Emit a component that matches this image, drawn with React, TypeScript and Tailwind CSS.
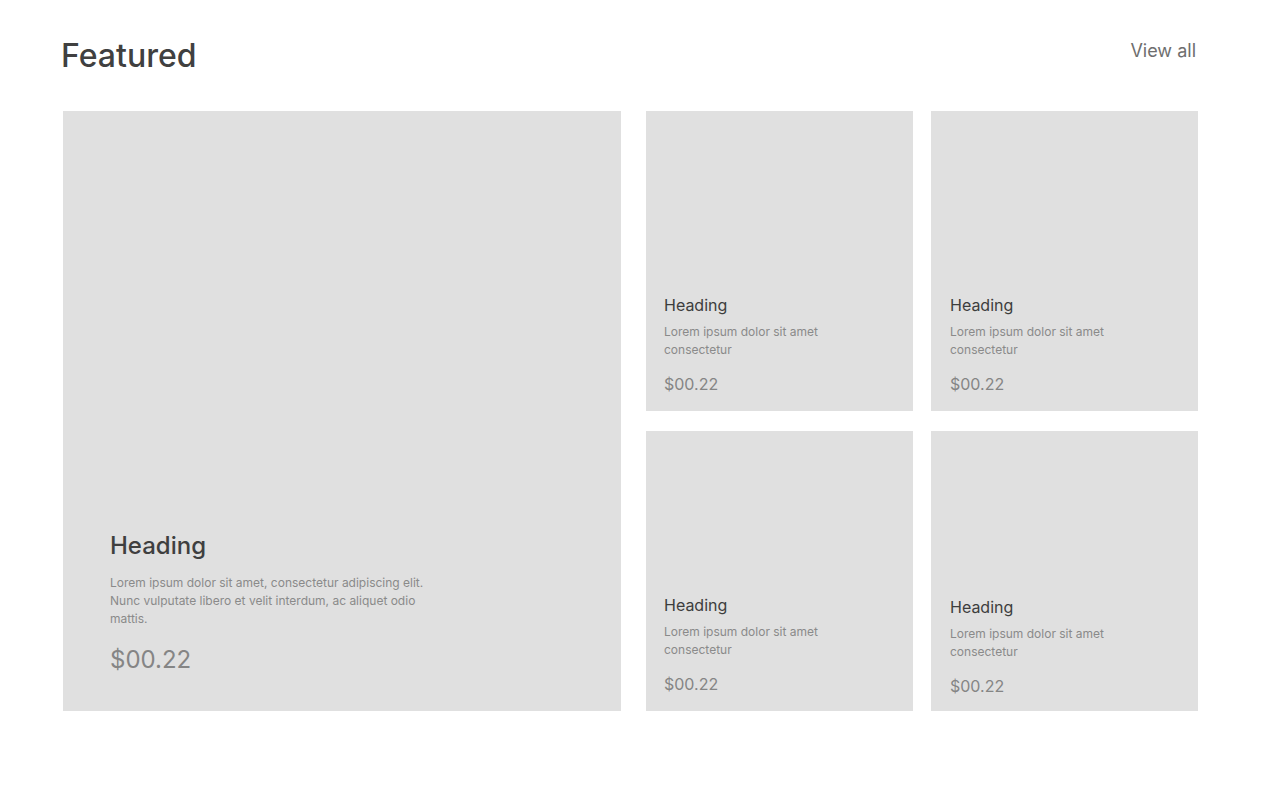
const font = { fontFamily: "Inter, 'Noto Sans', sans-serif" }

type SmallCardProps = { height: string; pb: string; pl: string }

const SmallCard = ({ height, pb, pl }: SmallCardProps) => (
  <div className={`flex flex-col justify-end bg-[#e0e0e0] pr-[18px] ${height} ${pb} ${pl}`}>
    <h3 className="text-[16px] leading-[20px] text-[#3d3d3d]">Heading</h3>
    <p className="mt-[8px] max-w-[160px] text-[12px] leading-[18px] text-[#8a8a8a]">
      Lorem ipsum dolor sit amet consectetur
    </p>
    <p className="mt-[15px] text-[16px] leading-[20px] text-[#858585]">$00.22</p>
  </div>
)

export default function App() {
  return (
    <div className="min-h-screen bg-white px-[61px] pt-[36px]" style={font}>
      <div className="flex items-start justify-between pr-[13px]">
        <h1 className="text-[32px] leading-[40px] font-medium text-[#404040]">Featured</h1>
        <a className="mt-[3px] text-[18px] leading-[24px] text-[#6e6e6e]">View all</a>
      </div>

      <div className="mt-[35px] flex pl-[2px]">
        <div className="flex h-[600px] w-[558px] flex-col justify-end bg-[#e0e0e0] px-[47px] pb-[36px]">
          <h2 className="text-[24px] leading-[30px] font-medium text-[#3f3f3f]">Heading</h2>
          <p className="mt-[13px] max-w-[320px] text-[12px] leading-[18px] text-[#8a8a8a]">
            Lorem ipsum dolor sit amet, consectetur adipiscing elit. Nunc vulputate libero et velit interdum, ac aliquet odio mattis.
          </p>
          <p className="mt-[17px] text-[24px] leading-[30px] text-[#858585]">$00.22</p>
        </div>

        <div className="ml-[25px] grid grid-cols-[267px_267px] gap-x-[18px] gap-y-[20px]">
          <SmallCard height="h-[300px]" pb="pb-[17px]" pl="pl-[18px]" />
          <SmallCard height="h-[300px]" pb="pb-[17px]" pl="pl-[19px]" />
          <SmallCard height="h-[280px]" pb="pb-[17px]" pl="pl-[18px]" />
          <SmallCard height="h-[280px]" pb="pb-[15px]" pl="pl-[19px]" />
        </div>
      </div>
    </div>
  )
}
